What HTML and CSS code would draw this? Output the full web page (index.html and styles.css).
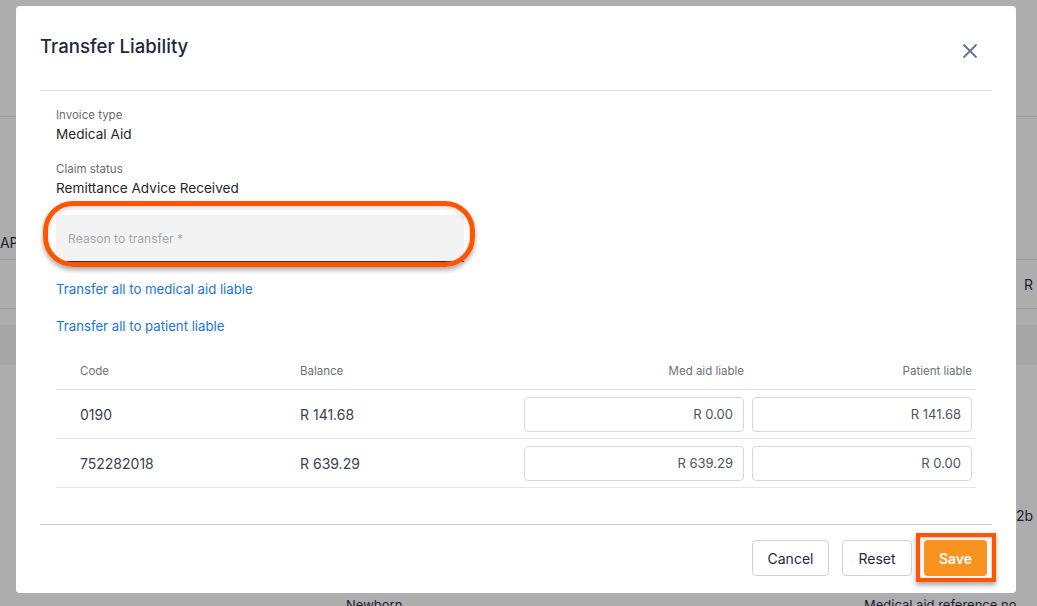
FILE: index.html
```html
<!DOCTYPE html>
<html>
<head>
  <meta charset="utf-8">
  <meta name="viewport" content="width=device-width, initial-scale=1">
  <link rel="stylesheet" href="styles.css">
</head>
<body>
  <!-- Page behind the dialog (dimmed) -->
  <div class="page">
    <div class="page-top"></div>
    <div class="page-row page-row-tall">
      <span class="bg-text bg-left">CAP</span>
    </div>
    <div class="page-row page-row-mid">
      <span class="bg-text bg-right">R</span>
    </div>
    <div class="page-gap"></div>
    <div class="page-band">
      <span class="bg-text bg-left-n">Action</span>
    </div>
    <div class="page-rest">
      <span class="bg-text bg-right-2b">2b</span>
    </div>
    <div class="page-bottom">
      <span class="bg-text bg-newborn">Newborn</span>
      <span class="bg-text bg-ref">Medical aid reference no</span>
    </div>
  </div>

  <div class="dialog">
    <div class="dialog-header">
      <h2 class="dialog-title">Transfer Liability</h2>
      <button class="close-button" aria-label="Close">
        <svg width="14" height="14" viewBox="0 0 14 14">
          <path d="M1 1L13 13M13 1L1 13" stroke="#64748b" stroke-width="1.8" stroke-linecap="round" fill="none"/>
        </svg>
      </button>
    </div>

    <div class="dialog-body">
      <div class="info-group">
        <div class="info-label">Invoice type</div>
        <div class="info-value">Medical Aid</div>
      </div>
      <div class="info-group">
        <div class="info-label">Claim status</div>
        <div class="info-value">Remittance Advice Received</div>
      </div>

      <div class="reason-field">
        <span class="reason-placeholder">Reason to transfer *</span>
        <span class="highlight-ring"></span>
      </div>

      <a class="action-link" href="#">Transfer all to medical aid liable</a>
      <a class="action-link" href="#">Transfer all to patient liable</a>

      <div class="liability-table">
        <div class="table-row table-head">
          <div class="cell cell-text">Code</div>
          <div class="cell cell-text">Balance</div>
          <div class="cell cell-right">Med aid liable</div>
          <div class="cell cell-right">Patient liable</div>
        </div>
        <div class="table-row">
          <div class="cell cell-text">0190</div>
          <div class="cell cell-text">R 141.68</div>
          <div class="cell cell-input"><div class="amount-input">R 0.00</div></div>
          <div class="cell cell-input"><div class="amount-input">R 141.68</div></div>
        </div>
        <div class="table-row">
          <div class="cell cell-text">752282018</div>
          <div class="cell cell-text">R 639.29</div>
          <div class="cell cell-input"><div class="amount-input">R 639.29</div></div>
          <div class="cell cell-input"><div class="amount-input">R 0.00</div></div>
        </div>
      </div>
    </div>

    <div class="dialog-footer">
      <button class="btn btn-outline btn-cancel">Cancel</button>
      <button class="btn btn-outline btn-reset">Reset</button>
      <button class="btn btn-primary">Save<span class="highlight-box"></span></button>
    </div>
  </div>
</body>
</html>
```

FILE: styles.css
```css
/* Base styles */
html, body {
  margin: 0;
  height: 100%;
}

body {
  font-family: Inter, "Noto Sans", sans-serif;
  background: #adadad;
  color: #1e293b;
  overflow: hidden;
}

/* Dimmed page behind the dialog */
.page {
  position: relative;
  height: 100%;
}

.page-top {
  height: 116px;
  border-bottom: 1px solid #9b9b9b;
}

.page-row {
  position: relative;
  border-bottom: 1px solid #9f9f9f;
}

.page-row-tall {
  height: 142px;
}

.page-row-mid {
  height: 48px;
}

.page-gap {
  height: 16px;
}

.page-band {
  position: relative;
  height: 40px;
  background: #a6a6a6;
}

.page-rest {
  position: relative;
  height: 230px;
}

.page-bottom {
  position: relative;
}

.bg-text {
  position: absolute;
  font-size: 14px;
  color: #1c2230;
  white-space: nowrap;
}

.bg-left { left: -10px; bottom: 8px; }
.bg-right { left: 1024px; top: 16px; }
.bg-left-n { left: -44px; top: 11px; }
.bg-right-2b { left: 1016px; top: 142px; }
.bg-newborn { left: 346px; top: 2px; font-size: 13px; }
.bg-ref { left: 864px; top: 2px; font-size: 13px; }

/* Dialog */
.dialog {
  position: fixed;
  left: 16px;
  top: 6px;
  width: 1000px;
  height: 587px;
  background: #fff;
  border-radius: 4px;
  box-sizing: border-box;
}

.dialog-header {
  display: flex;
  justify-content: space-between;
  align-items: flex-start;
  height: 84px;
  margin: 0 24px;
  border-bottom: 1px solid #e2e8f0;
}

.dialog-title {
  margin: 27px 0 0;
  font-size: 18.6px;
  line-height: 26px;
  font-weight: 500;
  color: #1e293b;
}

.close-button {
  margin: 29px 6px 0 0;
  width: 32px;
  height: 32px;
  padding: 0;
  border: none;
  background: none;
  display: flex;
  align-items: center;
  justify-content: center;
  cursor: pointer;
}

.dialog-body {
  margin: 0 24px;
  padding: 15px 16px 0;
}

.info-group {
  margin-bottom: 16px;
}

.info-label {
  font-size: 11.5px;
  line-height: 18px;
  color: #6b6b6b;
}

.info-value {
  font-size: 13.6px;
  line-height: 20px;
  color: #262626;
}

/* Reason input */
.reason-field {
  position: relative;
  width: 408px;
  height: 47px;
  margin-top: 17px;
  background: #f3f3f3;
  border-radius: 4px 4px 0 0;
  border-bottom: 1px solid #333;
  box-sizing: border-box;
  display: flex;
  align-items: center;
  padding-left: 12px;
}

.reason-placeholder {
  font-size: 12.2px;
  color: #a3a8b0;
}

.highlight-ring {
  position: absolute;
  left: -13px;
  right: -11px;
  top: -14px;
  bottom: -6px;
  border: 5px solid #ff5500;
  border-radius: 30px;
  box-shadow: 0 3px 5px rgba(0, 0, 0, 0.35), inset 0 2px 4px rgba(0, 0, 0, 0.15);
  pointer-events: none;
}

/* Links */
.action-link {
  display: block;
  font-size: 13.2px;
  line-height: 20px;
  color: #1976d2;
  text-decoration: none;
  margin-top: 17px;
}

/* Table */
.liability-table {
  margin-top: 13px;
}

.table-row {
  display: grid;
  grid-template-columns: 220px 244px 228px 228px;
  height: 48px;
  border-bottom: 1px solid #e5e7eb;
  align-items: center;
}

.table-head {
  height: 36px;
  padding-top: 4px;
}

.table-head .cell {
  font-size: 11.5px;
  color: #6b7280;
}

.cell {
  font-size: 14px;
  color: #3b4252;
}

.cell-text {
  padding-left: 24px;
}

.cell-right {
  text-align: right;
  padding-right: 4px;
}

.cell-input {
  padding: 0 4px;
}

.amount-input {
  height: 35px;
  border: 1px solid #d4d7dc;
  border-radius: 4px;
  box-sizing: border-box;
  display: flex;
  align-items: center;
  justify-content: flex-end;
  padding-right: 10px;
  font-size: 13px;
  color: #4b5563;
}

/* Footer */
.dialog-footer {
  margin: 36px 24px 0;
  padding: 15px 5px 16px 0;
  border-top: 1px solid #c9ccd1;
  display: flex;
  justify-content: flex-end;
  gap: 13px;
}

.btn {
  position: relative;
  height: 36px;
  font-family: inherit;
  font-size: 14px;
  border-radius: 4px;
  cursor: pointer;
}

.btn-outline {
  background: #fff;
  border: 1px solid #cfd2d6;
  color: #1e293b;
}

.btn-cancel { width: 77px; }
.btn-reset { width: 70px; }

.btn-primary {
  width: 63px;
  margin-left: -1px;
  background: #f7931e;
  border: none;
  color: #fff;
  font-weight: 600;
}

.highlight-box {
  position: absolute;
  left: -8px;
  right: -9px;
  top: -7px;
  bottom: -6px;
  border: 4px solid #ff5500;
  box-shadow: 0 3px 5px rgba(0, 0, 0, 0.35), inset 0 1px 3px rgba(0, 0, 0, 0.3);
  pointer-events: none;
}
```
